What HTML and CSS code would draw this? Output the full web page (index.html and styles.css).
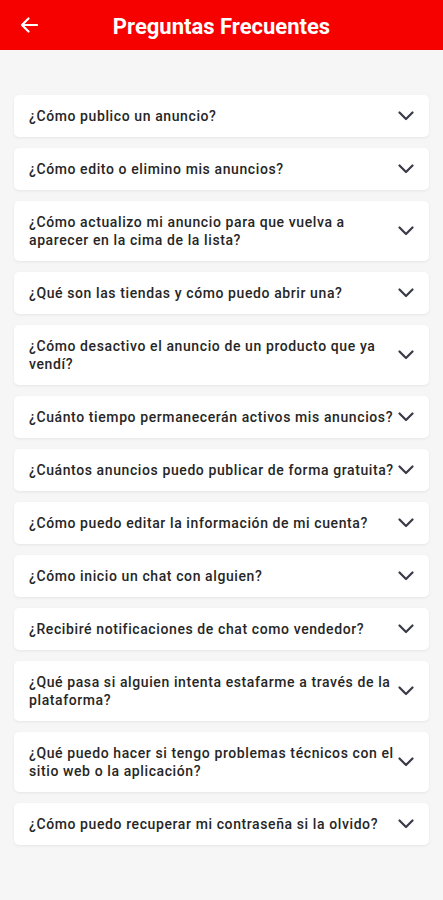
FILE: index.html
```html
<!DOCTYPE html>
<html lang="es">
<head>
    <meta charset="UTF-8">
    <meta name="viewport" content="width=device-width, initial-scale=1.0">
    <title>Preguntas Frecuentes</title>
    <link rel="stylesheet" href="styles.css">
</head>
<body>

    <!-- Header -->
    <div class="header">
        <a class="back" href="#" aria-label="Volver">
            <svg width="18" height="16" viewBox="0 0 18 16">
                <path d="M17 8H2M8.5 1.5L2 8l6.5 6.5" fill="none" stroke="#fff" stroke-width="2.2" stroke-linecap="round" stroke-linejoin="round"/>
            </svg>
        </a>
        <h1>Preguntas Frecuentes</h1>
    </div>

    <!-- FAQ list -->
    <div class="faq-list">
        <div class="faq-item"><span class="question">¿Cómo publico un anuncio?</span><svg class="chevron" viewBox="0 0 16 10"><path d="M1.5 1.5L8 8l6.5-6.5"/></svg></div>
        <div class="faq-item"><span class="question">¿Cómo edito o elimino mis anuncios?</span><svg class="chevron" viewBox="0 0 16 10"><path d="M1.5 1.5L8 8l6.5-6.5"/></svg></div>
        <div class="faq-item"><span class="question">¿Cómo actualizo mi anuncio para que vuelva a aparecer en la cima de la lista?</span><svg class="chevron" viewBox="0 0 16 10"><path d="M1.5 1.5L8 8l6.5-6.5"/></svg></div>
        <div class="faq-item"><span class="question">¿Qué son las tiendas y cómo puedo abrir una?</span><svg class="chevron" viewBox="0 0 16 10"><path d="M1.5 1.5L8 8l6.5-6.5"/></svg></div>
        <div class="faq-item"><span class="question">¿Cómo desactivo el anuncio de un producto que ya vendí?</span><svg class="chevron" viewBox="0 0 16 10"><path d="M1.5 1.5L8 8l6.5-6.5"/></svg></div>
        <div class="faq-item"><span class="question">¿Cuánto tiempo permanecerán activos mis anuncios?</span><svg class="chevron" viewBox="0 0 16 10"><path d="M1.5 1.5L8 8l6.5-6.5"/></svg></div>
        <div class="faq-item"><span class="question">¿Cuántos anuncios puedo publicar de forma gratuita?</span><svg class="chevron" viewBox="0 0 16 10"><path d="M1.5 1.5L8 8l6.5-6.5"/></svg></div>
        <div class="faq-item"><span class="question">¿Cómo puedo editar la información de mi cuenta?</span><svg class="chevron" viewBox="0 0 16 10"><path d="M1.5 1.5L8 8l6.5-6.5"/></svg></div>
        <div class="faq-item"><span class="question">¿Cómo inicio un chat con alguien?</span><svg class="chevron" viewBox="0 0 16 10"><path d="M1.5 1.5L8 8l6.5-6.5"/></svg></div>
        <div class="faq-item"><span class="question">¿Recibiré notificaciones de chat como vendedor?</span><svg class="chevron" viewBox="0 0 16 10"><path d="M1.5 1.5L8 8l6.5-6.5"/></svg></div>
        <div class="faq-item"><span class="question">¿Qué pasa si alguien intenta estafarme a través de la plataforma?</span><svg class="chevron" viewBox="0 0 16 10"><path d="M1.5 1.5L8 8l6.5-6.5"/></svg></div>
        <div class="faq-item"><span class="question">¿Qué puedo hacer si tengo problemas técnicos con el sitio web o la aplicación?</span><svg class="chevron" viewBox="0 0 16 10"><path d="M1.5 1.5L8 8l6.5-6.5"/></svg></div>
        <div class="faq-item"><span class="question">¿Cómo puedo recuperar mi contraseña si la olvido?</span><svg class="chevron" viewBox="0 0 16 10"><path d="M1.5 1.5L8 8l6.5-6.5"/></svg></div>
    </div>

</body>
</html>
```

FILE: styles.css
```css
body {
    font-family: Roboto, "Liberation Sans", Arial, sans-serif;
    margin: 0;
    padding: 0;
    background-color: #f6f6f6;
    min-height: 900px;
}

.header {
    background-color: #f70000;
    color: white;
    height: 50px;
    display: flex;
    align-items: center;
}

.header .back {
    display: flex;
    margin-left: 20px;
    margin-top: -1px;
}

.header h1 {
    flex: 1;
    margin: 2px 38px 0 0;
    font-size: 22px;
    font-weight: 700;
    text-align: center;
}

.faq-list {
    display: flex;
    flex-direction: column;
    gap: 11px;
    padding: 45px 14px 40px 14px;
}

.faq-item {
    display: flex;
    align-items: center;
    background-color: white;
    border-radius: 5px;
    box-shadow: 0 1px 3px rgba(0, 0, 0, 0.07);
    padding: 12px 15px 12px 15px;
    min-height: 18px;
}

.faq-item .question {
    flex: 1;
    font-size: 14px;
    font-weight: 500;
    line-height: 18px;
    letter-spacing: 0.6px;
    color: #262626;
}

.faq-item .chevron {
    width: 16px;
    height: 10px;
    flex-shrink: 0;
}

.faq-item .chevron path {
    fill: none;
    stroke: #3a3a48;
    stroke-width: 2.2;
    stroke-linecap: round;
    stroke-linejoin: round;
}
```
